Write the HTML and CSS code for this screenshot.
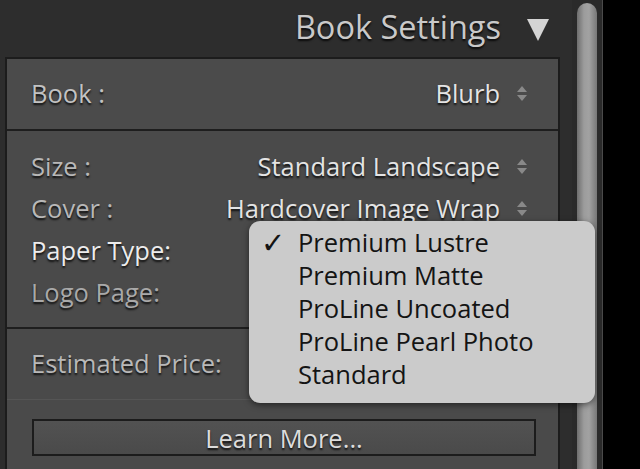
FILE: index.html
```html
<!DOCTYPE html>
<html lang="en">
<head>
    <meta charset="UTF-8">
    <title>Book Settings</title>
    <link rel="stylesheet" href="styles.css">
</head>
<body>
<div class="app">
    <div class="panel">
        <div class="panel-header">
            <span class="panel-title">Book Settings</span>
            <span class="collapse-arrow"></span>
        </div>
        <div class="sections">
            <div class="section section-book">
                <div class="row">
                    <span class="label">Book :</span>
                    <span class="value">Blurb</span>
                    <svg class="spinner" width="12" height="20" viewBox="0 0 12 20"><polygon points="6,2 11,8 1,8"/><polygon points="1,11 11,11 6,17"/></svg>
                </div>
            </div>
            <div class="section section-options">
                <div class="row">
                    <span class="label dim">Size :</span>
                    <span class="value">Standard Landscape</span>
                    <svg class="spinner" width="12" height="20" viewBox="0 0 12 20"><polygon points="6,2 11,8 1,8"/><polygon points="1,11 11,11 6,17"/></svg>
                </div>
                <div class="row">
                    <span class="label dim">Cover :</span>
                    <span class="value">Hardcover Image Wrap</span>
                    <svg class="spinner" width="12" height="20" viewBox="0 0 12 20"><polygon points="6,2 11,8 1,8"/><polygon points="1,11 11,11 6,17"/></svg>
                </div>
                <div class="row">
                    <span class="label active">Paper Type:</span>
                </div>
                <div class="row">
                    <span class="label dimmer">Logo Page:</span>
                </div>
            </div>
            <div class="section section-price">
                <div class="row">
                    <span class="label dim">Estimated Price:</span>
                </div>
            </div>
            <div class="section section-learn">
                <button type="button" class="learn-btn">Learn More...</button>
            </div>
        </div>
    </div>
    <div class="scroll-track">
        <div class="scroll-thumb"></div>
    </div>

    <!-- paper type popup -->
    <ul class="popup-menu">
        <li class="checked">Premium Lustre</li>
        <li>Premium Matte</li>
        <li>ProLine Uncoated</li>
        <li>ProLine Pearl Photo</li>
        <li>Standard</li>
    </ul>
</div>
</body>
</html>
```

FILE: styles.css
```css
html, body {
    margin: 0;
    padding: 0;
    background-color: #000;
}
body {
    font-family: "Open Sans", Lato, sans-serif;
}
.app {
    position: relative;
    display: flex;
    width: 640px;
    height: 469px;
    overflow: hidden;
    background-color: #000;
}
.panel {
    width: 567px;
    padding-left: 5px;
    background-color: #2d2d2d;
    display: flex;
    flex-direction: column;
}
.panel-header {
    height: 57px;
    display: flex;
    align-items: center;
    justify-content: flex-end;
    padding-right: 23px;
    gap: 26px;
}
.panel-title {
    font-size: 32.5px;
    line-height: 40px;
    margin-top: -3px;
    color: #c9c9c9;
    text-shadow: 0 2px 2px rgba(0, 0, 0, 0.8);
}
.collapse-arrow {
    width: 0;
    height: 0;
    border-left: 11px solid transparent;
    border-right: 11px solid transparent;
    border-top: 22px solid #d4d4d4;
    margin-top: 2px;
}
.sections {
    flex: 1;
    width: 551px;
    border: 2px solid #1c1c1c;
    border-bottom: 0;
    background-color: #4a4a4a;
}
.section {
    border-bottom: 2px solid #1e1e1e;
}
.section-book {
    height: 70px;
    display: flex;
    align-items: center;
    background-color: #4b4b4b;
}
.section-options {
    padding: 15px 0 13px;
}
.section-price {
    height: 70px;
    display: flex;
    align-items: center;
    border-bottom: 1px solid #555;
}
.section-learn {
    border-bottom: 0;
    padding-top: 19px;
}
.row {
    display: flex;
    align-items: center;
    height: 42px;
    width: 100%;
    padding: 0 30px 0 24px;
    box-sizing: border-box;
}
.label, .value {
    font-size: 25.5px;
    line-height: 32px;
    margin-top: -3px;
    text-shadow: 0 2px 2px rgba(0, 0, 0, 0.8);
}
.label {
    color: #c2c2c2;
}
.label.dim {
    color: #b8b8b8;
}
.label.dimmer {
    color: #a9a9a9;
}
.label.active {
    color: #ececec;
}
.value {
    margin-left: auto;
    color: #e4e4e4;
}
.spinner {
    margin-left: 16px;
    fill: #898989;
}
.learn-btn {
    display: block;
    width: 504px;
    height: 37px;
    margin-left: 25px;
    border: 2px solid #1c1c1c;
    background: linear-gradient(#525252, #4a4a4a);
    color: #dcdcdc;
    font-family: "Open Sans", Lato, sans-serif;
    font-size: 25.5px;
    line-height: 28px;
    text-shadow: 0 2px 2px rgba(0, 0, 0, 0.8);
    padding: 0;
}
.scroll-track {
    width: 31px;
    background-color: #2a2a2a;
    border-right: 1px solid #4a4a4a;
    box-sizing: border-box;
    padding: 3px 5px 0 5px;
}
.scroll-thumb {
    height: 480px;
    border-radius: 10px;
    background: linear-gradient(90deg, #6e6e6e, #9c9c9c 35%, #a2a2a2 60%, #777);
}
.popup-menu {
    position: absolute;
    left: 249px;
    top: 221px;
    width: 346px;
    height: 182px;
    margin: 0;
    padding: 5px 0 0 49px;
    box-sizing: border-box;
    list-style: none;
    background-color: #cbcbcb;
    border-radius: 11px;
    box-shadow: 0 2px 6px rgba(0, 0, 0, 0.5);
}
.popup-menu li {
    position: relative;
    height: 33px;
    line-height: 33px;
    font-size: 25.5px;
    color: #141414;
}
.popup-menu li.checked::before {
    content: "\2713";
    position: absolute;
    left: -37px;
    top: 1px;
    font-family: "DejaVu Sans", sans-serif;
    font-size: 29px;
}
```
